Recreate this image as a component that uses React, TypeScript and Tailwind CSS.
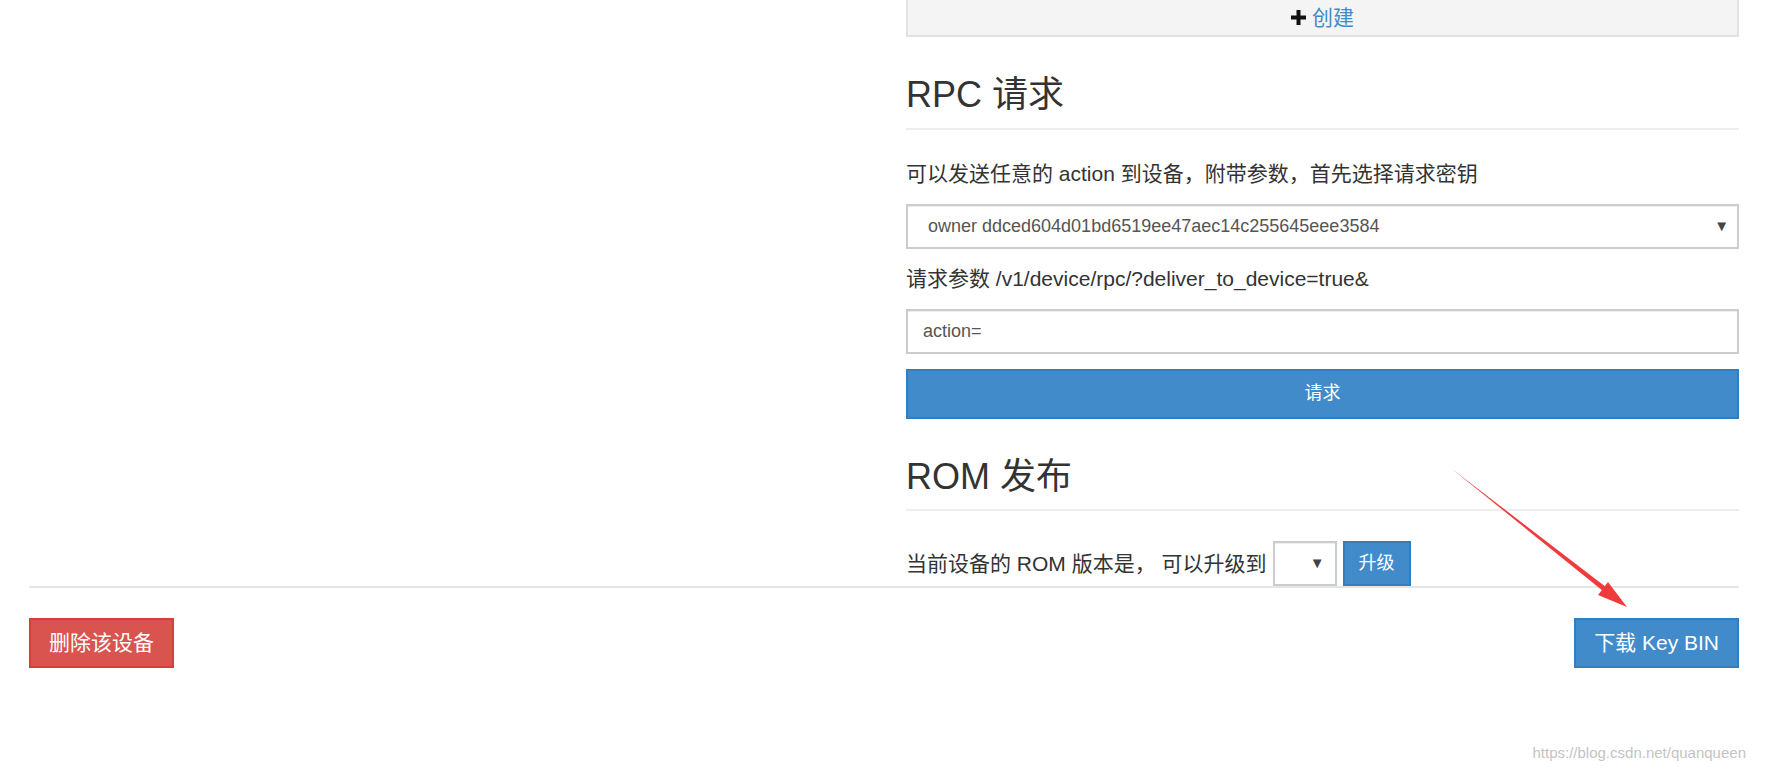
import React from "react";

function PlusIcon() {
  return (
    <svg className="w-[15px] h-[15px]" viewBox="0 0 15 15" fill="#111">
      <rect x="5.5" y="0" width="4" height="15" />
      <rect x="0" y="5.5" width="15" height="4" />
    </svg>
  );
}

export default function App() {
  return (
    <div className="relative h-[775px] overflow-hidden bg-white text-[#333] font-['Liberation_Sans','Noto_Sans_CJK_SC',sans-serif]">
      <div className="mx-[29px]">
        <div className="grid grid-cols-2">
          <div />
          <div className="pl-[22px]">
            {/* create bar */}
            <div className="h-[37px] flex items-center justify-center gap-[6px] bg-[#f4f4f4] border-x-2 border-b-2 border-[#e2e2e2]">
              <PlusIcon />
              <span className="text-[21px] leading-none text-[#428bca]">创建</span>
            </div>

            {/* RPC */}
            <h3 className="mt-[38px] text-[36px] leading-[39.6px] pb-[13px] border-b-2 border-[#eeeeee] font-normal">
              RPC 请求
            </h3>
            <p className="mt-[29px] text-[21px] leading-[30px]">
              可以发送任意的 action 到设备，附带参数，首先选择请求密钥
            </p>
            <div className="mt-[15px] h-[45px] flex items-center justify-between pl-[20px] pr-[8px] border-2 border-[#cccccc] shadow-[inset_0_1px_1px_rgba(0,0,0,0.075)] text-[18px] text-[#555]">
              <span>owner ddced604d01bd6519ee47aec14c255645eee3584</span>
              <span className="text-[15px] text-[#444]">▼</span>
            </div>
            <p className="mt-[15px] text-[21px] leading-[30px]">
              请求参数 /v1/device/rpc/?deliver_to_device=true&amp;
            </p>
            <input
              readOnly
              value="action="
              className="mt-[15px] block w-full h-[45px] px-[15px] border-2 border-[#cccccc] shadow-[inset_0_1px_1px_rgba(0,0,0,0.075)] text-[18px] text-[#555] outline-none"
            />
            <button
              type="button"
              className="mt-[15px] block w-full h-[50px] bg-[#428bca] border-2 border-[#357ebd] text-white text-[18px]"
            >
              请求
            </button>

            {/* ROM */}
            <h3 className="mt-[38px] text-[36px] leading-[39.6px] pb-[13px] border-b-2 border-[#eeeeee] font-normal">
              ROM 发布
            </h3>
            <div className="mt-[30px] h-[45px] flex items-center">
              <span className="text-[21px]">当前设备的 ROM 版本是， 可以升级到</span>
              <div className="ml-[6px] w-[64px] h-[45px] flex items-center justify-end pr-[10px] border-2 border-[#cccccc] shadow-[inset_0_1px_1px_rgba(0,0,0,0.075)]">
                <span className="text-[15px] text-[#444]">▼</span>
              </div>
              <button
                type="button"
                className="ml-[6px] w-[68px] h-[45px] bg-[#428bca] border-2 border-[#357ebd] text-white text-[18px]"
              >
                升级
              </button>
            </div>
          </div>
        </div>

        {/* footer */}
        <div className="border-t-2 border-[#e5e5e5] pt-[30px] flex justify-between">
          <button
            type="button"
            className="h-[50px] px-[18px] bg-[#d9534f] border-2 border-[#d43f3a] text-white text-[21px]"
          >
            删除该设备
          </button>
          <button
            type="button"
            className="h-[50px] px-[18px] bg-[#428bca] border-2 border-[#357ebd] text-white text-[21px]"
          >
            下载 Key BIN
          </button>
        </div>
      </div>

      {/* annotation arrow */}
      <svg className="absolute left-0 top-0 w-[1768px] h-[775px] pointer-events-none" viewBox="0 0 1768 775">
        <polygon points="1452,469 1605.5,593 1608.5,589" fill="#ef3b3b" />
        <polygon points="1627,607 1598,595 1608,582" fill="#ef3b3b" />
      </svg>

      <div className="absolute right-[22px] bottom-[11px] text-[15px] text-[#c4c4c4]">
        https://blog.csdn.net/quanqueen
      </div>
    </div>
  );
}
